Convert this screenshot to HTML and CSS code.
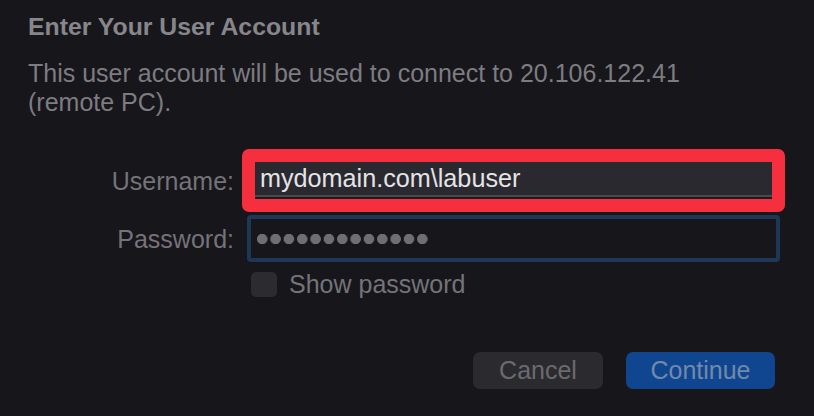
FILE: index.html
```html
<!DOCTYPE html>
<html lang="en">
<head>
<meta charset="utf-8">
<title>Enter Your User Account</title>
<link rel="stylesheet" href="styles.css">
</head>
<body>
<main class="dialog">
  <h1 class="title">Enter Your User Account</h1>
  <p class="desc">This user account will be used to connect to 20.106.122.41 (remote PC).</p>
  <form class="form">
    <label class="label">Username:</label>
    <div class="field field-user"><div class="user-inner"><span class="value">mydomain.com\labuser</span></div></div>
    <label class="label">Password:</label>
    <div class="field field-pass"><div class="dots" aria-label="password hidden"></div></div>
    <div class="spacer"></div>
    <label class="check"><span class="box"></span><span class="check-text">Show password</span></label>
  </form>
  <div class="actions">
    <button class="btn cancel" type="button">Cancel</button>
    <button class="btn primary" type="button">Continue</button>
  </div>
</main>
</body>
</html>
```
FILE: styles.css
```css
* { box-sizing: border-box; }
html, body { margin: 0; height: 100%; }
body {
  background: #17161b;
  font-family: "Liberation Sans", Arial, sans-serif;
  overflow: hidden;
}
.dialog {
  padding: 13px 39px 0 28px;
}
.title {
  margin: 0;
  font-size: 24.8px;
  line-height: 28px;
  font-weight: bold;
  color: #87868b;
}
.desc {
  margin: 18px 0 0;
  width: 690px;
  font-size: 25px;
  line-height: 29px;
  color: #7d7c81;
}
.form {
  margin-top: 32px;
  display: grid;
  grid-template-columns: 206px 533px;
  column-gap: 13px;
  row-gap: 3px;
}
.label {
  font-size: 25px;
  line-height: 30px;
  color: #747378;
  text-align: right;
  align-self: center;
}
.field-user {
  margin: 0 -5px;
  height: 63px;
  border: 13px solid #f52f3e;
  border-radius: 7px;
  background: #17161b;
}
.user-inner {
  height: 100%;
  padding-left: 5px;
  background: linear-gradient(to bottom, #2a2930 0 33px, #4a494f 33px 35px, #1c1b20 35px 37px);
  display: flex;
  align-items: center;
}
.value {
  font-size: 25.2px;
  line-height: 30px;
  color: #e4e4e6;
  margin-top: -6px;
}
.field-pass {
  height: 47px;
  border: 4px solid #1d3856;
  border-radius: 4px;
  background: #17161b;
  display: flex;
  align-items: center;
  padding-left: 6px;
}
.dots {
  width: 171px;
  height: 12px;
  background: radial-gradient(circle at 5.2px 6px, #6f6e73 4.9px, transparent 5.5px) 0 0 / 13.35px 12px repeat-x;
}
.check {
  grid-column: 2;
  margin-top: 7px;
  margin-left: 4px;
  display: flex;
  align-items: center;
  height: 25px;
}
.box {
  width: 26px;
  height: 25px;
  border-radius: 5px;
  background: #2c2b30;
  flex: none;
}
.check-text {
  margin-left: 12px;
  font-size: 25px;
  line-height: 25px;
  color: #747378;
}
.actions {
  margin-top: 55px;
  display: flex;
  justify-content: flex-end;
  gap: 23px;
}
.btn {
  height: 37px;
  border: 0;
  border-radius: 7px;
  font-family: "Liberation Sans", Arial, sans-serif;
  font-size: 25px;
  line-height: 37px;
  padding: 0;
}
.cancel {
  width: 130px;
  background: #2b2a2f;
  color: #6b6a6f;
}
.primary {
  width: 149px;
  background: #10468f;
  color: #7189ab;
}
```
